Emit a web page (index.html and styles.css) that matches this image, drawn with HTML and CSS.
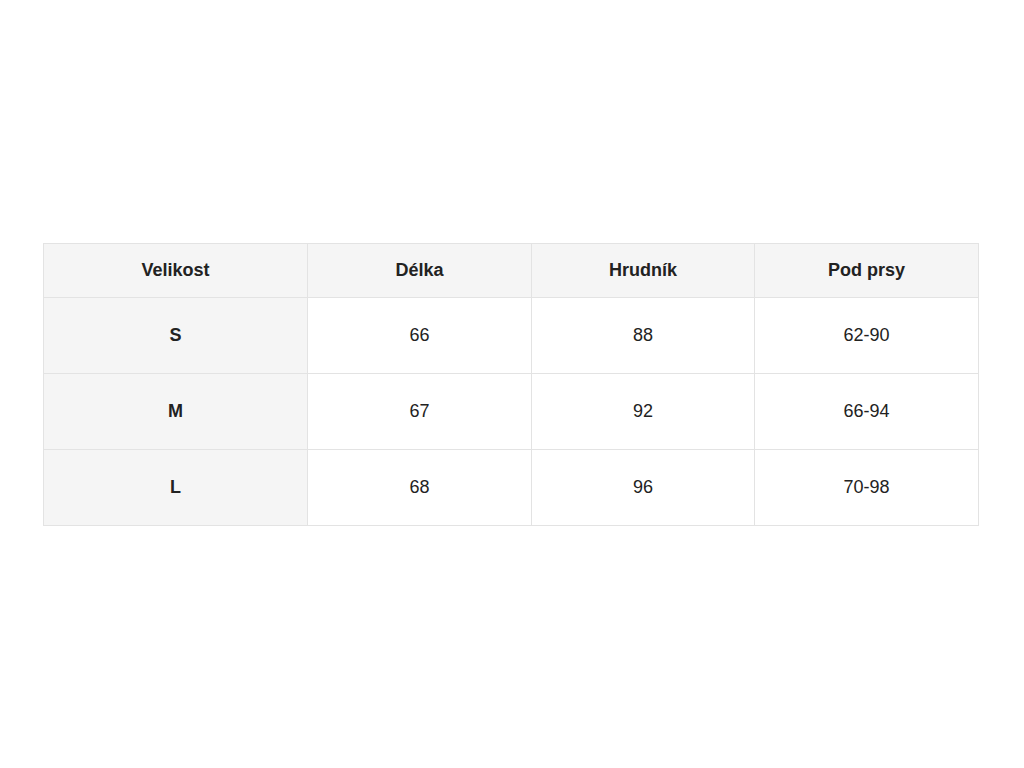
FILE: index.html
```html
<!DOCTYPE html>
<html lang="cs">
<head>
<meta charset="utf-8">
<title>Velikosti</title>
<link rel="stylesheet" href="styles.css">
</head>
<body>
<main class="page">
  <table class="size-table">
    <colgroup>
      <col class="col-first">
      <col class="col-a">
      <col class="col-b">
      <col class="col-c">
    </colgroup>
    <thead>
      <tr>
        <th>Velikost</th>
        <th>Délka</th>
        <th>Hrudník</th>
        <th>Pod prsy</th>
      </tr>
    </thead>
    <tbody>
      <tr>
        <th class="row-head">S</th>
        <td>66</td>
        <td>88</td>
        <td>62-90</td>
      </tr>
      <tr>
        <th class="row-head">M</th>
        <td>67</td>
        <td>92</td>
        <td>66-94</td>
      </tr>
      <tr>
        <th class="row-head">L</th>
        <td>68</td>
        <td>96</td>
        <td>70-98</td>
      </tr>
    </tbody>
  </table>
</main>
</body>
</html>
```

FILE: styles.css
```css
html, body {
  margin: 0;
  padding: 0;
  background: #ffffff;
}

.page {
  min-height: 768px;
  display: flex;
  align-items: center;
  padding-left: 43px;
  box-sizing: border-box;
}

.size-table {
  width: 935px;
  border-collapse: collapse;
  table-layout: fixed;
  font-family: "Liberation Sans", Arial, sans-serif;
  font-size: 18px;
  color: #222222;
}

.col-first { width: 264px; }
.col-a { width: 224px; }
.col-b { width: 223px; }
.col-c { width: 224px; }

.size-table th,
.size-table td {
  border: 1px solid #e3e3e3;
  text-align: center;
  vertical-align: middle;
  padding: 0;
}

.size-table thead th {
  height: 53px;
  background: #f5f5f5;
  font-weight: bold;
}

.size-table tbody th,
.size-table tbody td {
  height: 75px;
}

.size-table .row-head {
  background: #f5f5f5;
  font-weight: bold;
}

.size-table td {
  font-weight: normal;
}
```
